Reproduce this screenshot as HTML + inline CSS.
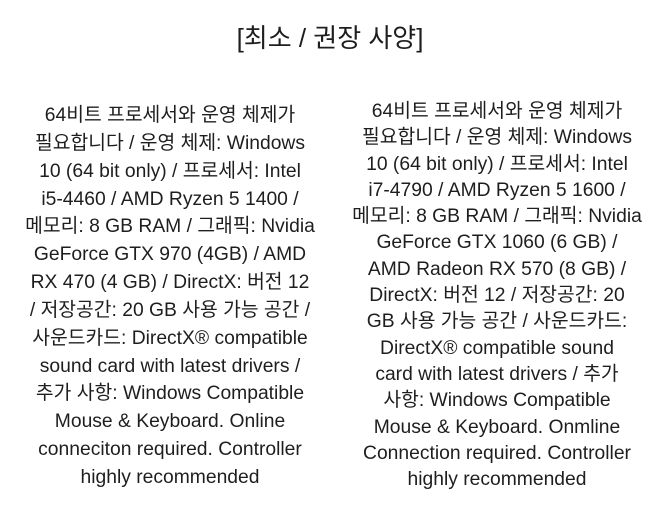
<!DOCTYPE html>
<html><head><meta charset="utf-8"><style>
body{margin:0;width:660px;height:514px;background:#fff;overflow:hidden;font-family:"Liberation Sans","Noto Sans CJK KR",sans-serif;color:#1e1e1e}
.t{position:absolute;left:0;width:660px;top:21px;text-align:center;font-size:26px;line-height:34px}
.c{position:absolute;text-align:center;font-size:19.3px;white-space:nowrap}
.l{left:20px;width:300px;top:102px;line-height:27.85px}
.r{left:347px;width:300px;top:99px;line-height:26.3px}
</style></head><body>
<div class="t">[최소 / 권장 사양]</div>
<div class="c l">64비트 프로세서와 운영 체제가<br>필요합니다 / 운영 체제: Windows<br>10 (64 bit only) / 프로세서: Intel<br>i5-4460 / AMD Ryzen 5 1400 /<br>메모리: 8 GB RAM / 그래픽: Nvidia<br>GeForce GTX 970 (4GB) / AMD<br>RX 470 (4 GB) / DirectX: 버전 12<br>/ 저장공간: 20 GB 사용 가능 공간 /<br>사운드카드: DirectX® compatible<br>sound card with latest drivers /<br>추가 사항: Windows Compatible<br>Mouse &amp; Keyboard. Online<br>conneciton required. Controller<br>highly recommended</div>
<div class="c r">64비트 프로세서와 운영 체제가<br>필요합니다 / 운영 체제: Windows<br>10 (64 bit only) / 프로세서: Intel<br>i7-4790 / AMD Ryzen 5 1600 /<br>메모리: 8 GB RAM / 그래픽: Nvidia<br>GeForce GTX 1060 (6 GB) /<br>AMD Radeon RX 570 (8 GB) /<br>DirectX: 버전 12 / 저장공간: 20<br>GB 사용 가능 공간 / 사운드카드:<br>DirectX® compatible sound<br>card with latest drivers / 추가<br>사항: Windows Compatible<br>Mouse &amp; Keyboard. Onmline<br>Connection required. Controller<br>highly recommended</div>
</body></html>
